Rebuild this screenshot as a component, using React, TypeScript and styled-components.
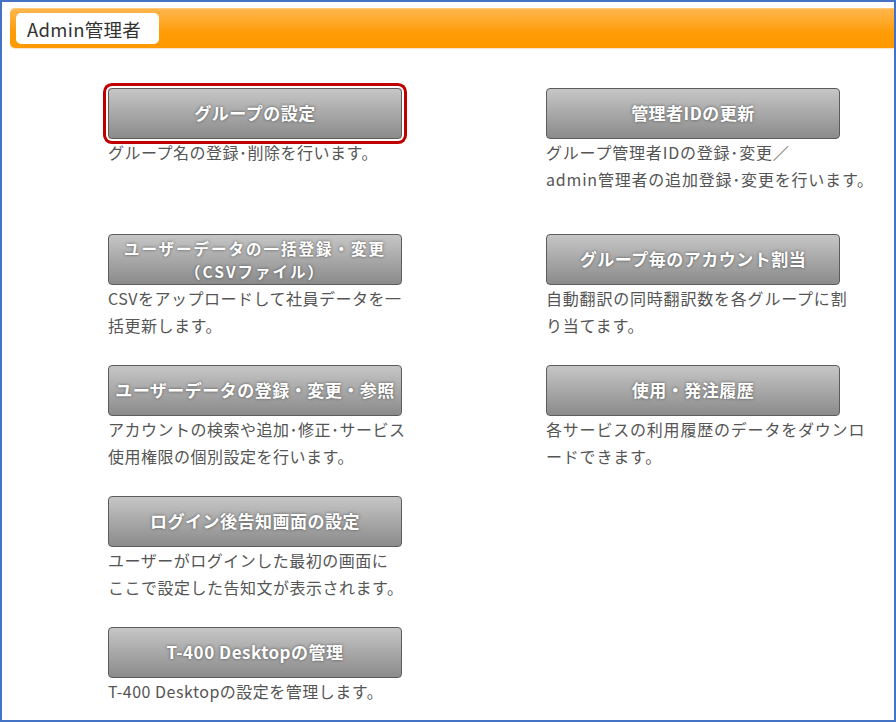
import React from 'react';
import styled, { createGlobalStyle } from 'styled-components';

const GlobalStyle = createGlobalStyle`
  html, body {
    margin: 0;
    padding: 0;
    background: #ffffff;
  }
  body {
    font-family: "Noto Sans CJK JP", "Noto Sans", sans-serif;
  }
`;

const Frame = styled.div`
  box-sizing: border-box;
  width: 896px;
  height: 722px;
  border: 2px solid #4472c4;
  background: #ffffff;
`;

const TitleBar = styled.div`
  display: flex;
  align-items: flex-start;
  height: 40px;
  margin: 6px 0 0 8px;
  padding: 5px 6px;
  box-sizing: border-box;
  border-radius: 5px 0 0 5px;
  border-top: 1px solid #ffc978;
  background: linear-gradient(#ffb64d 0%, #ffa726 35%, #ff9c06 60%, #ff9900 100%);
  box-shadow: 0 1px 0 #fde4c4;
`;

const TitleTab = styled.div`
  display: flex;
  align-items: center;
  width: 143px;
  height: 31px;
  margin-top: -1px;
  padding-left: 11px;
  box-sizing: border-box;
  border-radius: 5px;
  background: #ffffff;
  color: #333333;
  font-size: 18.5px;
  letter-spacing: 0.3px;
`;

const Menu = styled.div`
  display: grid;
  grid-template-columns: 438px auto;
  grid-template-rows: 120px repeat(4, 105px);
  row-gap: 26px;
  margin-top: 40px;
  padding-left: 106px;
`;

const Item = styled.div<{ $col: number }>`
  grid-column: ${(p) => p.$col};
  display: flex;
  flex-direction: column;
  align-items: flex-start;
`;

const MenuButton = styled.button<{ $active?: boolean; $lines: number }>`
  position: relative;
  z-index: 1;
  display: flex;
  flex-direction: column;
  align-items: center;
  justify-content: center;
  width: 294px;
  height: 51px;
  margin: 0;
  padding: 0;
  box-sizing: border-box;
  border: 1px solid #5c5c5c;
  border-radius: 4px;
  background: linear-gradient(#c6c6c6 0%, #ababab 45%, #8b8b8b 100%);
  color: #ffffff;
  font-family: "Noto Sans CJK JP", sans-serif;
  font-size: ${(p) => (p.$lines > 1 ? '15.5px' : '17px')};
  font-weight: 700;
  line-height: 22.5px;
  letter-spacing: ${(p) => (p.$lines > 1 ? '2px' : '0.5px')};
  text-shadow: 0 0 3px rgba(70, 70, 70, 0.9);
  cursor: pointer;
  box-shadow: ${(p) => (p.$active ? '0 0 0 2px #ffffff, 0 0 0 5px #c00000' : 'none')};
`;

const Desc = styled.p<{ $wide?: boolean }>`
  margin: 0;
  color: #555555;
  font-size: 16px;
  line-height: 27px;
  letter-spacing: ${(p) => (p.$wide ? '0.8px' : '0.5px')};
  white-space: nowrap;
`;

type Entry = {
  col: number;
  label: string[];
  desc: string[];
  active?: boolean;
};

const entries: Entry[] = [
  { col: 1, label: ['グループの設定'], desc: ['グループ名の登録･削除を行います。'], active: true },
  { col: 2, label: ['管理者IDの更新'], desc: ['グループ管理者IDの登録･変更／', 'admin管理者の追加登録･変更を行います。'] },
  { col: 1, label: ['ユーザーデータの一括登録・変更', '（CSVファイル）'], desc: ['CSVをアップロードして社員データを一', '括更新します。'] },
  { col: 2, label: ['グループ毎のアカウント割当'], desc: ['自動翻訳の同時翻訳数を各グループに割', 'り当てます。'] },
  { col: 1, label: ['ユーザーデータの登録・変更・参照'], desc: ['アカウントの検索や追加･修正･サービス', '使用権限の個別設定を行います。'] },
  { col: 2, label: ['使用・発注履歴'], desc: ['各サービスの利用履歴のデータをダウンロ', 'ードできます。'] },
  { col: 1, label: ['ログイン後告知画面の設定'], desc: ['ユーザーがログインした最初の画面に', 'ここで設定した告知文が表示されます。'] },
  { col: 1, label: ['T-400 Desktopの管理'], desc: ['T-400 Desktopの設定を管理します。'] },
];

export default function App() {
  return (
    <>
      <GlobalStyle />
      <Frame>
        <TitleBar>
          <TitleTab>Admin管理者</TitleTab>
        </TitleBar>
        <Menu>
          {entries.map((e, i) => (
            <Item key={i} $col={e.col}>
              <MenuButton $active={e.active} $lines={e.label.length}>
                {e.label.map((l, j) => (
                  <span key={j}>{l}</span>
                ))}
              </MenuButton>
              <Desc $wide={e.col === 2}>
                {e.desc.map((d, j) => (
                  <React.Fragment key={j}>
                    {j > 0 && <br />}
                    {d}
                  </React.Fragment>
                ))}
              </Desc>
            </Item>
          ))}
        </Menu>
      </Frame>
    </>
  );
}
